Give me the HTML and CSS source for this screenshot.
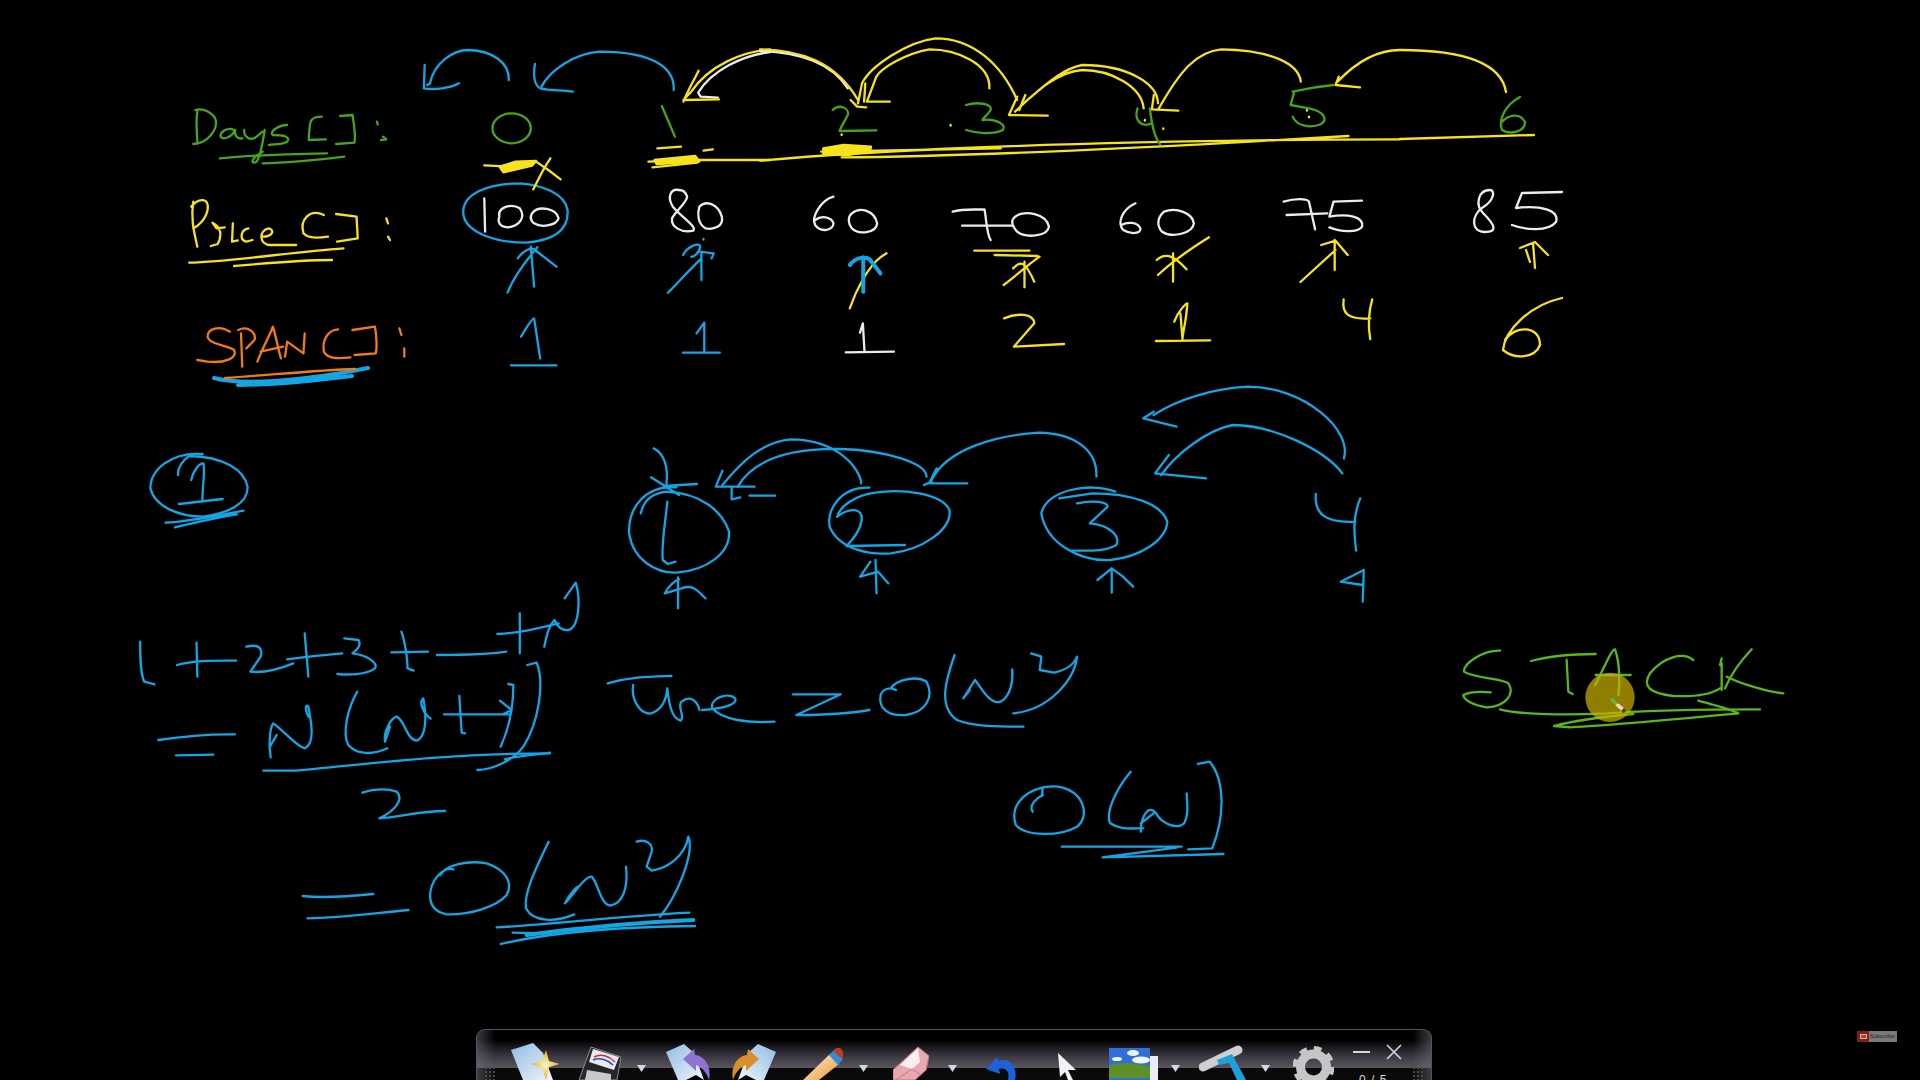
FILE: index.html
```html
<!DOCTYPE html>
<html lang="en">
<head>
<meta charset="utf-8">
<title>Stock span whiteboard</title>
<link rel="stylesheet" href="styles.css">
</head>
<body>
<main class="stage">
<svg class="board" viewBox="0 0 1920 1080" xmlns="http://www.w3.org/2000/svg" role="img">
<title>Handwritten notes: Days, Price and Span arrays, nearest greater element arcs, 1+2+3+...+N = N(N+1)/2 = O(N²), Time = O(N²), O(N), STACK</title>

<!-- top-left board -->
<g transform="translate(130 20) scale(.40816 .33333)">
  <g class="ink white">
    <path d="M1568 96C1500 106 1425 152 1392 218L1398 230L1440 233"/>
    <path d="M868 535L870 635"/>
    <path d="M905 590C900 560 935 550 955 565C970 590 955 620 925 622C905 620 900 605 905 590"/>
    <path d="M985 580C1000 555 1045 565 1050 595C1045 615 1010 625 990 610C980 600 980 590 985 580"/>
    <path d="M1345 510C1325 505 1315 530 1330 560C1350 590 1390 620 1380 632C1350 640 1325 620 1328 595C1340 570 1365 545 1365 530C1360 510 1350 510 1345 510"/>
    <path d="M1395 560C1410 540 1440 550 1450 590C1455 620 1430 630 1410 625C1390 610 1390 580 1395 560"/>
  </g>
  <g class="ink blue">
    <path d="M928 180C930 130 890 92 830 90C790 90 745 130 735 190"/>
    <path d="M722 135L720 205C745 210 785 205 806 190M735 190L728 195"/>
    <path d="M1332 210C1335 150 1290 95 1150 95C1090 100 1030 150 1008 200"/>
    <path d="M992 132C988 165 990 195 1005 205C1030 212 1060 210 1085 215"/>
    <path d="M955 490C880 490 810 520 817 585C825 640 900 668 970 668C1050 660 1075 620 1072 570C1065 520 1010 495 955 490"/>
    <path d="M982 680L990 800M950 715C965 690 985 680 992 690L1045 740M998 682C975 715 940 770 925 818"/>
    <path d="M1400 695L1400 780M1355 705C1365 680 1395 665 1397 680C1395 700 1380 712 1375 710M1395 695L1430 700L1425 715M1400 715C1370 750 1345 785 1318 818M1405 657L1405 659"/>
    <path d="M958 950C970 925 985 895 990 895C995 930 1000 980 1005 1015M933 1036L1045 1036"/>
    <path d="M1388 940L1407 908L1407 997M1355 998L1445 998"/>
  </g>
  <g class="ink yellow">
    <path d="M1568 88C1500 95 1420 135 1375 215L1362 232M1393 152C1380 185 1365 215 1356 245M1356 240L1443 238"/>
    <path d="M868 436L935 440L995 425L1025 450L1055 478M1030 415C1010 450 1000 480 988 508"/>
    <path class="solid" d="M905 440L945 425L995 423L985 437L915 457Z"/>
    <path d="M1292 385L1350 380M1405 392L1428 388M1270 425L1390 420L1568 420M1280 442L1390 428"/>
    <path class="solid" d="M1285 420L1385 408L1395 425L1290 432Z"/>
    <path d="M155 545C148 600 158 640 165 680M150 560C170 530 195 535 190 570C185 600 165 620 155 625"/>
    <path d="M198 678L215 672C225 650 225 622 202 608L212 625L232 622M252 610L250 665L264 661M290 625C270 630 268 660 285 665L300 660M325 650C350 650 355 630 340 625C315 630 315 675 345 675L407 675"/>
    <path d="M475 585C440 565 415 600 425 640C435 655 460 655 485 650M505 582L555 590L558 655L507 665M628 595L632 610M632 650L637 660"/>
    <path d="M145 728C250 725 400 695 523 685M255 738C330 730 420 720 495 720"/>
  </g>
  <g class="ink green">
    <path d="M165 275C160 310 165 340 165 370M155 372C190 370 215 330 210 300C205 280 180 262 160 270"/>
    <path d="M255 330C240 320 220 335 222 350C230 362 250 350 258 330C255 345 262 358 275 355"/>
    <path d="M280 330C278 350 295 365 310 350L325 335M330 330C325 370 320 410 310 425C295 435 295 415 325 395"/>
    <path d="M385 315C365 315 340 335 350 345C375 345 395 350 385 365C370 375 350 372 340 375"/>
    <path d="M470 290C440 290 440 300 438 360L480 358M515 288L545 285C550 320 553 350 550 368L505 372M605 305L607 313M620 350L628 358L615 360"/>
    <path d="M220 415C300 405 400 402 483 400M325 430C400 428 470 418 525 410"/>
    <path d="M935 280C960 280 982 300 982 325C982 350 960 370 935 370C910 370 888 350 888 325C888 300 910 280 935 280"/>
    <path d="M1303 258L1335 350"/>
  </g>
  <g class="ink orange">
    <path d="M245 935C220 915 190 925 190 950C195 975 240 975 255 990C265 1015 230 1030 190 1025L165 1020"/>
    <path d="M275 1040L272 940M265 930C290 915 310 940 305 960L285 985"/>
    <path d="M312 1025C330 970 345 940 350 920C360 960 365 1000 370 1015M320 995L375 980M380 1010L385 965L425 1000L428 940"/>
    <path d="M510 928C485 930 470 960 475 995C485 1020 520 1015 540 1012M545 930L600 920C605 950 605 990 602 1000L550 1005M660 925L665 945M672 985L672 1010"/>
  </g>
</g>

<!-- span underline, 85, 6 and last arc -->
<g class="ink blue">
  <path class="thick" d="M214 378C240 385 300 382 368 368M238 385C280 385 320 380 352 376"/>
</g>
<g class="ink orange"><path d="M225 378C270 375 320 370 355 369"/></g>
<g class="ink white">
  <path d="M1490 190C1478 190 1475 205 1483 213C1495 225 1498 232 1485 232C1470 232 1472 215 1482 208C1495 200 1495 190 1490 190"/>
  <path d="M1562 192L1522 193L1516 208C1540 205 1560 210 1556 222C1548 232 1525 230 1512 225"/>
</g>
<g class="ink yellow">
  <path d="M1400 50C1440 50 1500 55 1506 92M1400 139L1534 135"/>
  <path d="M1533 243L1535 268M1520 248L1535 242L1548 255M1526 250L1530 262"/>
  <path d="M1562 298C1530 305 1505 330 1503 350C1515 360 1535 358 1540 345C1540 325 1515 325 1505 340"/>
</g>
<g class="ink green"><path d="M1520 97C1505 105 1498 120 1502 130C1510 135 1525 132 1525 122C1520 112 1508 115 1502 122"/></g>

<!-- top-right board -->
<g transform="translate(760 20) scale(.40816 .33333)">
  <g class="ink white">
    <path d="M0 93C100 96 175 128 215 205"/>
    <path d="M180 530C150 540 125 590 135 615C150 640 180 630 180 610C175 590 150 585 135 600"/>
    <path d="M225 580C245 560 280 570 287 610C285 640 240 645 225 625C215 610 215 590 225 580"/>
    <path d="M472 575C500 565 530 570 550 568C555 600 555 640 565 660M495 617L620 617"/>
    <path d="M625 590C650 570 700 580 708 620C705 650 650 655 630 635C615 615 615 600 625 590"/>
    <path d="M920 550C885 570 875 610 890 630C910 645 935 640 932 625C925 605 900 605 885 615"/>
    <path d="M990 575C1020 560 1060 580 1063 610C1060 640 1010 655 985 635C970 615 975 590 990 575"/>
    <path d="M1283 545C1310 535 1340 535 1345 545L1360 628M1290 585L1390 580"/>
    <path d="M1475 542L1405 545L1395 590C1440 580 1480 590 1475 620C1465 640 1420 635 1395 622"/>
    <path d="M245 938L252 910L256 995M210 997L328 995"/>
  </g>
  <g class="ink yellow">
    <path d="M0 88C100 90 185 125 240 240"/>
    <path d="M630 240C590 130 520 55 430 55C360 65 270 140 250 190L240 250"/>
    <path d="M562 205C565 130 480 88 415 88C360 100 300 140 285 170L262 245L318 245M258 190L255 245M222 240L238 260L260 262"/>
    <path d="M0 422C200 400 700 360 1568 358M200 412C500 410 1000 380 1442 348M150 395L590 385M210 380L270 382"/>
    <path class="solid" d="M155 385L205 375L272 380L270 392L215 405L155 402Z"/>
    <path d="M975 250C975 190 900 135 790 135C740 145 690 205 650 245M940 265C935 200 860 150 790 150C730 155 680 210 625 275"/>
    <path d="M630 230L610 285L705 287M650 225L635 270"/>
    <path d="M1325 185C1320 130 1250 90 1130 88C1070 95 1030 150 975 270M965 225L960 268L1025 272"/>
    <path d="M1568 90C1500 90 1450 140 1415 185M1418 170L1410 195L1470 202"/>
    <path d="M200 343L200 345M467 315L467 317M943 300L943 302M988 325L988 327M1345 290L1345 292M1340 270L1340 272"/>
    <path d="M310 700L295 712C265 740 235 810 220 865"/>
    <path d="M525 692L660 692M575 705L680 708M648 725L648 802M620 745C640 720 650 725 672 785M685 710C650 740 625 770 597 795"/>
    <path d="M1012 700L1012 785M972 720C990 700 1010 700 1045 748M1100 652C1050 690 1010 725 975 765"/>
    <path d="M1408 660L1408 750M1375 675L1410 662L1440 705M1410 690L1324 786"/>
    <path d="M598 895C630 878 670 880 672 910L622 980L745 972"/>
    <path d="M1015 905C1025 870 1045 850 1047 850C1045 900 1035 940 1035 960M970 963L1103 961M1030 880L1035 955"/>
    <path d="M1430 838C1425 880 1440 900 1495 895M1500 838C1490 880 1490 920 1495 957"/>
  </g>
  <g class="ink green">
    <path d="M178 270C195 250 220 265 215 285C205 310 198 320 195 333L285 331"/>
    <path d="M505 255C530 245 570 250 565 270C555 290 545 295 545 300C580 295 605 315 595 330C570 345 530 340 505 330"/>
    <path d="M925 265C915 300 935 325 960 310M955 265C960 310 965 350 980 372"/>
    <path d="M1305 215C1340 205 1380 198 1405 195M1308 220L1300 255L1345 265C1385 275 1390 300 1375 312C1350 325 1315 320 1305 290"/>
  </g>
  <g class="ink blue">
    <path class="thick" d="M253 712L253 815M220 735C235 710 260 708 270 720L295 760"/>
  </g>
</g>

<!-- left: circled 1, series -->
<g transform="translate(130 380) scale(.40816 .33333)">
  <g class="ink blue">
    <path d="M178 222C100 215 50 270 50 325C60 380 120 410 180 410C240 400 290 370 288 320C280 270 230 230 145 228C130 240 115 265 118 285"/>
    <path d="M150 300C155 270 170 250 180 250C185 290 175 330 178 365M120 372L227 357"/>
    <path d="M87 428C150 425 220 405 278 392M110 442C170 425 220 410 262 403"/>
    <path d="M25 785C25 830 25 880 35 905L60 913M115 855C160 840 210 842 260 842M163 788L165 890"/>
    <path d="M285 800C320 790 325 810 320 830L295 875C330 880 370 865 400 850M385 838C430 830 480 825 520 820M428 760L437 890"/>
    <path d="M525 775L560 780C570 800 550 815 545 820C580 825 610 850 600 865C580 885 530 885 508 882"/>
    <path d="M640 817L730 815M665 755C675 790 680 840 680 865L695 872M752 825C800 825 870 825 922 815"/>
    <path d="M900 762C950 760 1000 745 1050 730M955 700L955 820"/>
    <path d="M1015 800C1020 770 1025 740 1040 720C1045 735 1055 752 1075 750C1100 740 1105 660 1092 608L1065 655"/>
  </g>
</g>

<!-- centre: circled nodes, Time, O(N) -->
<g transform="translate(600 380) scale(.5102 .33333)">
  <g class="ink blue">
    <path d="M105 205C125 220 135 260 130 315M100 292L155 345M125 318L190 312"/>
    <path d="M150 322C90 315 55 380 57 460C65 540 110 580 150 578C210 570 255 520 253 455C240 395 200 340 130 335C100 340 85 365 80 400"/>
    <path d="M132 365C128 430 120 490 123 540L133 552L148 545"/>
    <path d="M153 592L153 685M127 640C135 615 150 600 155 598M127 640L160 625C185 610 195 640 207 655"/>
    <path d="M240 272L227 320L303 320M258 325L258 358L275 352M293 347L343 347"/>
    <path d="M512 310C510 270 470 180 375 178C320 185 280 240 240 315M640 290C640 250 560 210 470 207C370 205 300 240 270 320"/>
    <path d="M660 265L645 310L720 310M635 315L650 305"/>
    <path d="M973 290C975 210 930 160 860 158C780 165 680 205 650 300"/>
    <path d="M528 323C470 320 445 390 450 440C470 510 530 525 570 520C630 510 690 450 685 390C670 340 590 325 540 338C500 345 470 380 465 410"/>
    <path d="M465 410C490 380 515 385 513 420C510 450 495 480 483 498L598 495"/>
    <path d="M540 540L542 640M510 590L530 545M510 590L545 575L565 610"/>
    <path d="M1010 335C960 305 875 330 865 400C875 490 940 545 1000 540C1060 530 1110 480 1112 425C1100 370 1040 340 965 340L900 355"/>
    <path d="M935 370C965 360 995 365 995 380L960 430C1000 435 1020 470 1012 495C990 515 960 512 925 512"/>
    <path d="M1003 565L1003 638M975 600L1003 565L1025 590L1045 620"/>
    <path d="M1458 235C1475 150 1380 20 1270 20C1200 25 1130 60 1085 105M1085 95L1065 115L1130 140"/>
    <path d="M1455 280C1420 210 1320 135 1240 135C1190 150 1130 220 1100 285M1115 225L1088 280L1188 295"/>
    <path d="M1403 342C1400 400 1420 430 1480 425M1490 355C1475 410 1478 460 1482 512"/>
    <path d="M1497 570L1495 665M1452 605L1497 570M1452 605L1495 615"/>
    <path d="M15 910C60 890 100 890 140 888M65 915C60 960 80 1005 100 1000C120 990 130 960 132 925C135 970 140 1015 158 1022C168 1010 150 980 160 965C175 945 190 960 195 990"/>
    <path d="M200 990C240 985 270 975 265 955C250 935 215 955 220 985C240 1020 290 1030 342 1025"/>
    <path d="M378 943L472 943L385 1005C440 1005 490 1000 528 990"/>
    <path d="M570 925C580 900 620 885 640 905C655 950 640 995 600 1005C565 1010 545 985 550 945C555 925 570 920 580 930"/>
    <path d="M695 825C680 890 660 980 700 1020C730 1040 780 1040 830 1040"/>
    <path d="M712 955L735 900C750 930 765 975 785 965C805 950 810 900 808 868M725 930L712 955"/>
    <path d="M845 820L865 830L862 870L890 878C915 870 930 850 935 830C930 900 880 990 810 1000"/>
    <path d="M868 1222C820 1240 805 1290 815 1335C835 1370 900 1370 935 1340C960 1310 950 1240 905 1222C885 1215 875 1222 868 1222L866 1248M868 1245C855 1255 840 1275 848 1295"/>
    <path d="M1040 1175C1010 1230 990 1300 1000 1330C1020 1350 1040 1345 1065 1345"/>
    <path d="M1060 1355C1060 1310 1075 1270 1090 1300C1100 1330 1130 1350 1145 1330C1155 1300 1150 1270 1150 1240M1060 1330L1085 1300"/>
    <path d="M1172 1152L1195 1145C1225 1200 1225 1310 1200 1405L1153 1408"/>
    <path d="M905 1400L1140 1400M1130 1403L985 1432L1222 1422"/>
  </g>
</g>

<!-- N(N+1) -->
<g transform="translate(140 640) scale(.33333)">
  <g class="ink blue">
    <path d="M55 300C120 290 220 282 285 283M108 346L220 344"/>
    <path d="M392 352C385 310 390 260 400 250C440 280 470 320 495 325C525 310 515 250 505 200C495 190 495 210 505 230M390 320L410 285"/>
    <path d="M652 155C625 200 605 280 625 315C650 345 700 345 742 325"/>
    <path d="M735 305C730 280 750 235 770 230C795 240 800 300 830 302C860 290 860 230 850 175C835 185 850 220 872 236M735 305L750 260"/>
    <path d="M912 223L1110 223M958 168L965 278L975 280M1080 182L1115 210L1090 222M1105 132L1120 135C1120 200 1105 270 1082 320"/>
    <path d="M1162 75L1190 68C1215 130 1195 250 1150 320C1120 360 1060 390 1012 390M1095 358C1140 345 1190 345 1230 338"/>
    <path d="M370 392L470 392C600 380 750 362 900 352C1000 345 1120 340 1230 340"/>
  </g>
</g>

<!-- /2 = O(N²) -->
<g transform="translate(280 740) scale(.33333)">
  <g class="ink blue">
    <path d="M247 158C280 148 320 145 350 155C375 180 340 215 298 235C360 230 430 212 495 213"/>
    <path d="M68 468C130 475 200 470 280 462M82 535C180 535 280 520 385 510"/>
    <path d="M480 405C500 375 560 360 620 370C680 390 700 430 680 465C650 500 570 525 500 523C460 515 445 490 452 450C460 415 490 380 520 388"/>
    <path d="M806 305C770 380 730 460 738 505C760 550 830 545 883 523"/>
    <path d="M855 490C870 460 890 440 895 440M860 485C890 450 915 410 935 410C955 430 960 490 990 497C1030 490 1045 440 1038 380"/>
    <path d="M1070 305C1100 295 1120 315 1115 335L1100 380L1115 392C1160 385 1215 350 1225 290C1245 340 1190 470 1140 530"/>
    <path d="M650 562C800 555 1000 530 1228 518M698 578L780 580M662 612C800 580 1000 560 1245 558"/>
    <path class="thick" d="M740 585C850 570 1000 550 1240 540"/>
  </g>
</g>

<!-- STACK -->
<g transform="translate(1420 620) scale(.33333)">
  <g class="ink lime">
    <path d="M240 92C190 90 130 130 132 155C160 175 250 175 265 190C285 220 260 260 200 262C160 255 130 240 130 225C150 215 190 215 212 217"/>
    <path d="M333 123C400 105 480 102 527 102M440 120L445 215L458 222"/>
    <path d="M525 195C550 150 575 85 585 88C600 130 600 190 595 225M527 165L632 165"/>
    <path d="M820 120C790 95 730 110 690 160C665 200 690 220 760 228C810 230 870 225 900 205"/>
    <path d="M905 130C905 160 905 190 905 210M905 115L900 135M995 88C960 125 930 170 915 205M920 170C960 190 1040 215 1090 220"/>
    <path d="M240 268C300 285 450 285 560 280C700 270 900 268 1020 268"/>
    <path d="M835 242C880 255 930 265 955 280C800 295 600 315 450 322L402 318C450 305 500 295 640 282"/>
  </g>
  <circle class="spot" cx="570" cy="232" r="74"/>
  <path class="pen-tip" d="M568 238L578 234L594 250L586 256Z"/>
  <path class="pen-body" d="M586 256L594 250L612 264L604 272Z"/>
  <path class="pen-end" d="M604 272L612 264L618 274L610 280Z"/>
</g>
</svg>

<div class="subscribe"><span class="sub-red"><span class="sub-play"></span></span><span class="sub-text">Subscribe</span></div>

<nav class="toolbar">
  <svg class="ic w48 m33" viewBox="0 0 48 40"><defs><linearGradient id="pg" x1="0" y1="0" x2="1" y2="1"><stop offset="0" stop-color="#8fbce2"/><stop offset="1" stop-color="#eef5fb"/></linearGradient><radialGradient id="st"><stop offset="0" stop-color="#fff6c8"/><stop offset="1" stop-color="#e8a820"/></radialGradient></defs><path fill="url(#pg)" d="M0 10L22 3L32 13L42 40H12Z"/><path fill="url(#st)" d="M35 10L38 21L49 24L38 27L35 40L31 28L20 24L31 21Z"/></svg>
  <svg class="ic w42 m20" viewBox="0 0 42 40"><path class="fl-body" d="M12 7L42 17L38 40H0Z"/><path class="fl-label" d="M14 9L40 17L35 30L10 22Z"/><path class="fl-red" d="M15 17C22 13 30 16 36 22"/><path class="fl-blue" d="M14 20C21 17 29 20 34 25"/><path class="fl-slot" d="M8 30L32 34V40H6Z"/></svg>
  <svg class="ic w9 m16" viewBox="0 0 9 40"><path class="caret" d="M0 25H9L4.500 32Z"/></svg>
  <svg class="ic w45 m20" viewBox="0 0 45 40"><path fill="url(#pg)" d="M0 12L18 4L28 13L38 40H12Z"/><path class="cut" d="M20 40L30 35L38 40Z"/><path class="ar-purple" d="M17 19L28 9L29 15C38 16 46 26 43 40C41 33 36 27 30 25L30 31Z"/></svg>
  <svg class="ic w45 m20" viewBox="0 0 45 40"><g transform="matrix(-1 0 0 1 45 0)"><path fill="url(#pg)" d="M0 12L18 4L28 13L38 40H12Z"/><path class="cut" d="M20 40L30 35L38 40Z"/><path class="ar-orange" d="M17 19L28 9L29 15C38 16 46 26 43 40C41 33 36 27 30 25L30 31Z"/></g></svg>
  <svg class="ic w40 m27" viewBox="0 0 40 40"><defs><linearGradient id="pn" x1="0" y1="0" x2="1" y2="1"><stop offset="0" stop-color="#fff0d8"/><stop offset="1" stop-color="#e89838"/></linearGradient></defs><path fill="url(#pn)" d="M0 40L27 14L36 24L16 40Z"/><path class="pn-blue" d="M26 15L31 10L40 19L35 25Z"/><path class="pn-red" d="M30 11C33 7 37 7 39 10C41 13 40 16 39 19Z"/></svg>
  <svg class="ic w9 m16" viewBox="0 0 9 40"><path class="caret" d="M0 25H9L4.500 32Z"/></svg>
  <svg class="ic w36 m25" viewBox="0 0 36 40"><path class="er-side" d="M0 30L25 7L36 16L33 30L22 40H0Z"/><path class="er-top" d="M7 25L25 8L27 22L19 29Z"/><path class="er-line" d="M3 40L19 29L28 35"/></svg>
  <svg class="ic w9 m19" viewBox="0 0 9 40"><path class="caret" d="M0 25H9L4.500 32Z"/></svg>
  <svg class="ic w30 m29" viewBox="0 0 30 40"><path class="ar-blue" d="M0 29L11 17L12 21C24 17 32 27 29 40H22C24 32 20 27 13 29L14 34Z"/></svg>
  <svg class="ic w18 m42" viewBox="0 0 18 40"><path class="cursor" d="M0 13L18 30H10L15 40H10L7 32L2 37Z"/></svg>
  <svg class="ic w49 m33" viewBox="0 0 49 40"><rect class="ph-back" x="40" y="16" width="9" height="24"/><rect class="ph-sky" x="0" y="8" width="41" height="32"/><ellipse class="ph-cloud" cx="24" cy="13" rx="6" ry="3"/><ellipse class="ph-cloud" cx="32" cy="20" rx="9" ry="3.500"/><ellipse class="ph-cloud" cx="8" cy="19" rx="5" ry="2"/><path class="ph-hill" d="M0 26C12 21 28 23 41 27V38H0Z"/></svg>
  <svg class="ic w9 m13" viewBox="0 0 9 40"><path class="caret" d="M0 25H9L4.500 32Z"/></svg>
  <svg class="ic w47 m19" viewBox="0 0 47 40"><path class="br-bar" d="M4 27L39 10"/><path class="br-handle" d="M18 20L33 14L47 40H38L30 23L20 25Z"/></svg>
  <svg class="ic w9 m15" viewBox="0 0 9 40"><path class="caret" d="M0 25H9L4.500 32Z"/></svg>
  <svg class="ic w41 m23" viewBox="0 0 41 40"><circle class="gear-ring" cx="20.500" cy="27" r="13"/><circle class="gear-teeth" cx="20.500" cy="27" r="18.500"/></svg>
  <div class="win">
    <div class="win-row">
      <span class="win-min"></span>
      <svg class="win-x" viewBox="0 0 16 16"><path d="M1 1L15 15M15 1L1 15"/></svg>
    </div>
    <span class="page-count">0 / 5</span>
  </div>
</nav>
</main>
</body>
</html>
```
FILE: styles.css
```css
* { box-sizing: border-box; }
html, body { margin: 0; padding: 0; background: #000; }
body { width: 1920px; height: 1080px; overflow: hidden; font-family: "Liberation Sans", Arial, sans-serif; }
.stage { position: relative; width: 1920px; height: 1080px; background: #000; overflow: hidden; }

.board { position: absolute; inset: 0; width: 1920px; height: 1080px; display: block; filter: blur(.3px); }
.ink { fill: none; stroke-width: 2.3; stroke-linecap: round; stroke-linejoin: round; }
.ink path { vector-effect: non-scaling-stroke; }
.ink .thick { stroke-width: 4; }
.ink .solid { fill: currentColor; }
.blue { stroke: #14a5e4; color: #14a5e4; }
.yellow { stroke: #f6e31c; color: #f6e31c; }
.white { stroke: #ececec; color: #ececec; }
.green { stroke: #46a51b; color: #46a51b; }
.lime { stroke: #58b81a; color: #58b81a; }
.orange { stroke: #f27b16; color: #f27b16; }
.spot { fill: #c8ae00; fill-opacity: .72; }
.pen-tip { fill: #6fae4a; }
.pen-body { fill: #f0dcc0; }
.pen-end { fill: #5a3a28; }

.subscribe { position: absolute; left: 1857px; top: 1031px; width: 40px; height: 11px; display: flex; border-radius: 1px; }
.sub-red { width: 12px; flex: none; background: #7c2018; display: flex; align-items: center; justify-content: center; }
.sub-play { width: 7px; height: 5px; background: #b04038; border: 1px solid #d8b0a8; }
.sub-text { flex: 1; background: #7a7a78; color: #222; font-size: 5.500px; line-height: 11px; padding-left: 1px; white-space: nowrap; }

.toolbar {
  position: absolute; left: 476px; top: 1029px; width: 956px; height: 51px;
  display: flex; align-items: flex-start; padding: 10px 0 0 1px;
  border: 1px solid #5e4c62; border-bottom: 0; border-radius: 9px 9px 0 0;
  background:
    linear-gradient(90deg, rgba(110,105,115,.55), rgba(0,0,0,0) 18px, rgba(0,0,0,0) calc(100% - 18px), rgba(110,105,115,.55)),
    linear-gradient(180deg, #000 0, #000 10px, #3a3740 26px, #5a5660 38px, #0a0a0a 38px, #0a0a0a 100%);
}
.toolbar::before, .toolbar::after {
  content: ""; position: absolute; top: 36px; width: 12px; height: 15px;
  background-image: radial-gradient(circle, #4a4a4a 1px, rgba(0,0,0,0) 1.200px);
  background-size: 4px 4px;
}
.toolbar::before { left: 7px; }
.toolbar::after { right: 7px; }

.ic { height: 40px; flex: none; display: block; }
.w48 { width: 48px; } .w42 { width: 42px; } .w9 { width: 9px; } .w45 { width: 45px; }
.w40 { width: 40px; } .w36 { width: 36px; } .w30 { width: 30px; } .w18 { width: 18px; }
.w49 { width: 49px; } .w47 { width: 47px; } .w41 { width: 41px; }
.m13 { margin-left: 13px; } .m15 { margin-left: 15px; } .m16 { margin-left: 16px; }
.m19 { margin-left: 19px; } .m20 { margin-left: 20px; } .m23 { margin-left: 23px; }
.m25 { margin-left: 25px; } .m27 { margin-left: 27px; } .m29 { margin-left: 29px; }
.m33 { margin-left: 33px; } .m42 { margin-left: 42px; }

.caret { fill: #d6d6de; }
.cut { fill: #000; }
.fl-body { fill: #26262a; stroke: #8a8a90; stroke-width: 1; }
.fl-label { fill: #e8e8ee; }
.fl-red { fill: none; stroke: #c83030; stroke-width: 1.500; }
.fl-blue { fill: none; stroke: #2850b0; stroke-width: 1.500; }
.fl-slot { fill: #c8c8cc; }
.ar-purple { fill: #8f72d2; }
.ar-orange { fill: #d98e2e; }
.ar-blue { fill: #1c62da; }
.pn-blue { fill: #2f8fd8; }
.pn-red { fill: #b8402a; }
.er-side { fill: #e8a8b0; stroke: #c87880; stroke-width: 1; }
.er-top { fill: #fbeef0; }
.er-line { fill: none; stroke: #c87880; stroke-width: 1; }
.cursor { fill: #f2f2f2; }
.ph-back { fill: #e8eef4; }
.ph-sky { fill: #2f70d8; }
.ph-cloud { fill: #f0f4fa; }
.ph-hill { fill: #5f8f28; }
.br-bar { fill: none; stroke: #cfcfcf; stroke-width: 9; stroke-linecap: round; }
.br-handle { fill: #1ea0d8; }
.gear-ring { fill: none; stroke: #c6c6c6; stroke-width: 9; }
.gear-teeth { fill: none; stroke: #c6c6c6; stroke-width: 5; stroke-dasharray: 7.500 7; }

.win { margin-left: 19px; width: 50px; display: flex; flex-direction: column; align-items: flex-start; margin-top: 4px; }
.win-row { display: flex; align-items: center; gap: 16px; height: 16px; }
.win-min { width: 17px; height: 2px; background: #d4d4d8; }
.win-x { width: 16px; height: 16px; display: block; }
.win-x path { fill: none; stroke: #d8d8dc; stroke-width: 1.600; }
.page-count { margin: 14px 0 0 6px; font-size: 12px; line-height: 12px; color: #d8d8d8; white-space: nowrap; word-spacing: 2px; }
```
